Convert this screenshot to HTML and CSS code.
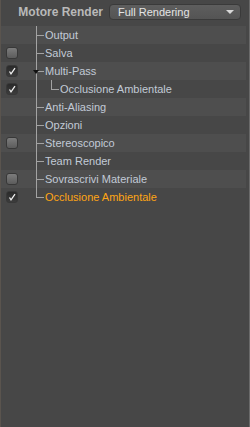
FILE: index.html
```
<!DOCTYPE html>
<html lang="it">
<head>
    <meta charset="UTF-8">
    <meta name="viewport" content="width=device-width, initial-scale=1.0">
    <title>Impostazioni Render</title>
    <link rel="stylesheet" href="styles.css">
</head>
<body>
    <div class="panel">
        <div class="header">
            <span class="label">Motore Render</span>
            <div class="select">
                <span>Full Rendering</span>
                <span class="arrow"></span>
            </div>
        </div>

        <div class="tree">
            <div class="row alt">
                <div class="check-cell"></div>
                <div class="line elbow"></div>
                <span class="name">Output</span>
            </div>
            <div class="row">
                <div class="check-cell"><span class="check"></span></div>
                <div class="line elbow"></div>
                <span class="name">Salva</span>
            </div>
            <div class="row alt">
                <div class="check-cell"><span class="check on"><svg viewBox="0 0 12 12"><path d="M3 6.6 L4.8 9.4 L9.6 2.6"/></svg></span></div>
                <div class="line elbow"><span class="twisty"></span></div>
                <span class="name">Multi-Pass</span>
            </div>
            <div class="row">
                <div class="check-cell"><span class="check on"><svg viewBox="0 0 12 12"><path d="M3 6.6 L4.8 9.4 L9.6 2.6"/></svg></span></div>
                <div class="line pass"></div>
                <div class="line elbow last"></div>
                <span class="name">Occlusione Ambientale</span>
            </div>
            <div class="row alt">
                <div class="check-cell"></div>
                <div class="line elbow"></div>
                <span class="name">Anti-Aliasing</span>
            </div>
            <div class="row">
                <div class="check-cell"></div>
                <div class="line elbow"></div>
                <span class="name">Opzioni</span>
            </div>
            <div class="row alt">
                <div class="check-cell"><span class="check"></span></div>
                <div class="line elbow"></div>
                <span class="name">Stereoscopico</span>
            </div>
            <div class="row">
                <div class="check-cell"></div>
                <div class="line elbow"></div>
                <span class="name">Team Render</span>
            </div>
            <div class="row alt">
                <div class="check-cell"><span class="check"></span></div>
                <div class="line elbow"></div>
                <span class="name">Sovrascrivi Materiale</span>
            </div>
            <div class="row">
                <div class="check-cell"><span class="check on"><svg viewBox="0 0 12 12"><path d="M3 6.6 L4.8 9.4 L9.6 2.6"/></svg></span></div>
                <div class="line elbow last"></div>
                <span class="name selected">Occlusione Ambientale</span>
            </div>
        </div>
    </div>
</body>
</html>
```

FILE: styles.css
```
html, body {
    margin: 0;
    height: 100%;
}

body {
    font-family: "Liberation Sans", Arial, sans-serif;
    font-size: 11px;
    background-color: #474747;
}

.panel {
    box-sizing: border-box;
    height: 100%;
    border-left: 1px solid #5a544e;
    border-right: 1px solid #6a6a6a;
    padding-right: 3px;
}

.header {
    display: flex;
    align-items: center;
    height: 26px;
    padding-bottom: 2px;
    box-sizing: border-box;
}

.label {
    width: 102px;
    text-align: right;
    font-weight: bold;
    font-size: 12px;
    color: #b9b9b9;
}

.select {
    display: flex;
    align-items: center;
    justify-content: space-between;
    margin-left: 6px;
    width: 132px;
    height: 16px;
    box-sizing: border-box;
    padding: 0 6px 0 8px;
    border: 1px solid #3a3a3a;
    border-radius: 4px;
    background: linear-gradient(#5e5e5e, #545454);
    color: #e4e4e4;
    font-size: 11px;
}

.arrow {
    width: 0;
    height: 0;
    border-left: 4px solid transparent;
    border-right: 4px solid transparent;
    border-top: 4px solid #d8d8d8;
}

.row {
    display: flex;
    align-items: center;
    height: 18px;
}

.row.alt {
    background-color: #4e4e4e;
}

.check-cell {
    width: 35px;
    height: 18px;
    display: flex;
    align-items: center;
    padding-left: 5px;
    box-sizing: border-box;
}

.check {
    width: 12px;
    height: 12px;
    box-sizing: border-box;
    border: 1px solid #383838;
    border-radius: 3px;
    background: linear-gradient(#7c7c7c, #5c5c5c);
}

.check.on {
    background: linear-gradient(#2a2a2a, #3c3c3c);
}

.check svg {
    display: block;
    width: 10px;
    height: 10px;
    fill: none;
    stroke: #f2f2f2;
    stroke-width: 1.5;
}

.line {
    position: relative;
    align-self: stretch;
    width: 8px;
}

.line.pass {
    width: 15px;
}

.line::before {
    content: "";
    position: absolute;
    left: 0;
    top: 0;
    bottom: 0;
    width: 1px;
    background-color: #a3a3a3;
}

.line.last::before {
    bottom: 9px;
}

.line.elbow::after {
    content: "";
    position: absolute;
    left: 0;
    top: 9px;
    width: 8px;
    height: 1px;
    background-color: #a3a3a3;
}

.twisty {
    position: absolute;
    left: -3px;
    top: 8px;
    z-index: 1;
    width: 0;
    height: 0;
    border-left: 3.5px solid transparent;
    border-right: 3.5px solid transparent;
    border-top: 4px solid #111;
}

.name {
    padding-left: 1px;
    color: #c2cad6;
    white-space: nowrap;
}

.name.selected {
    color: #ffa514;
}
```
